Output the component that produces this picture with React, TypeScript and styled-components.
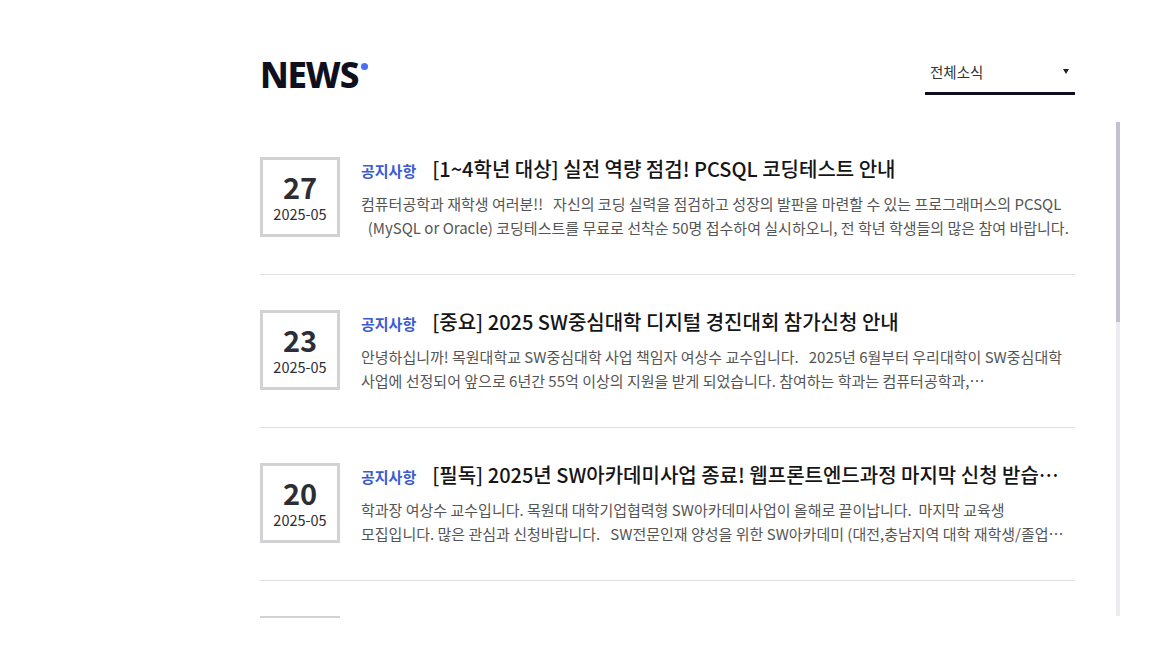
import React from "react";
import styled, { createGlobalStyle } from "styled-components";

const GlobalStyle = createGlobalStyle`
  html, body { margin: 0; padding: 0; background: #fff; }
  body { font-family: "Noto Sans CJK KR", "Noto Sans", sans-serif; color: #111; }
  * { box-sizing: border-box; }
`;

const Page = styled.div`
  padding: 55px 0 0 260px;
  width: 1166px;
  height: 671px;
  overflow: hidden;
`;

const Header = styled.div`
  display: flex;
  align-items: flex-end;
  justify-content: space-between;
  width: 815px;
  height: 40px;
`;

const Title = styled.h2`
  position: relative;
  margin: 0;
  font-family: "Noto Sans", sans-serif;
  font-weight: 800;
  font-size: 35px;
  line-height: 40px;
  letter-spacing: -1.2px;
  color: #0f0f1e;
`;

const Dot = styled.span`
  position: absolute;
  right: -10px;
  top: 8px;
  width: 7px;
  height: 7px;
  border-radius: 50%;
  background: #4a6ef5;
`;

const Select = styled.div`
  display: flex;
  align-items: center;
  justify-content: space-between;
  width: 150px;
  height: 39px;
  padding: 0 6px 5px 5px;
  border-bottom: 3px solid #0f0e1f;
  font-size: 14.5px;
  color: #333;
`;

const Caret = styled.span`
  width: 0;
  height: 0;
  border-left: 3.5px solid transparent;
  border-right: 3.5px solid transparent;
  border-top: 5px solid #222;
`;

const ListWrap = styled.div`
  position: relative;
  margin-top: 27px;
  width: 860px;
  height: 496px;
`;

const List = styled.ul`
  list-style: none;
  margin: 0;
  padding: 0 45px 0 0;
  width: 100%;
  height: 100%;
  overflow: hidden;
`;

const ScrollTrack = styled.div`
  position: absolute;
  top: 0;
  right: 0;
  width: 4px;
  height: 494px;
  background: #ebebf0;
`;

const ScrollThumb = styled.div`
  width: 100%;
  height: 200px;
  background: #c2c1cd;
`;

const Item = styled.li`
  display: flex;
  align-items: flex-start;
  gap: 21px;
  padding: 35px 0 34px;
  border-bottom: 1px solid #e1e1e1;
`;

const DateBox = styled.div`
  flex: none;
  width: 80px;
  height: 80px;
  border: 3px solid #d2d2d4;
  display: flex;
  flex-direction: column;
  align-items: center;
  justify-content: center;
  color: #2d2d36;
`;

const Day = styled.span`
  font-size: 29px;
  font-weight: 700;
  line-height: 32px;
  margin-top: -1px;
`;

const Month = styled.span`
  font-size: 14.5px;
  line-height: 18px;
  margin-top: 3px;
`;

const Body = styled.div`
  flex: 1;
  min-width: 0;
`;

const Heading = styled.div`
  display: flex;
  align-items: baseline;
  gap: 16px;
  height: 26px;
  margin-top: -3px;
`;

const Category = styled.span`
  flex: none;
  font-size: 15px;
  font-weight: 700;
  color: #3c5bd0;
`;

const ItemTitle = styled.span`
  flex: 1;
  min-width: 0;
  font-size: 20px;
  font-weight: 500;
  color: #151515;
  white-space: nowrap;
  overflow: hidden;
  text-overflow: ellipsis;
`;

const Desc = styled.p`
  margin: 12px 0 0;
  font-size: 15px;
  line-height: 24px;
  color: #555;
  word-break: keep-all;
  display: -webkit-box;
  -webkit-line-clamp: 2;
  -webkit-box-orient: vertical;
  overflow: hidden;
`;

const news = [
  {
    day: "27",
    month: "2025-05",
    title: "[1~4학년 대상] 실전 역량 점검! PCSQL 코딩테스트 안내",
    desc: "컴퓨터공학과 재학생 여러분!! \u00a0\u00a0자신의 코딩 실력을 점검하고 성장의 발판을 마련할 수 있는 프로그래머스의 PCSQL \u00a0\u00a0(MySQL or Oracle) 코딩테스트를 무료로 선착순 50명 접수하여 실시하오니, 전 학년 학생들의 많은 참여 바랍니다.",
  },
  {
    day: "23",
    month: "2025-05",
    title: "[중요] 2025 SW중심대학 디지털 경진대회 참가신청 안내",
    desc: "안녕하십니까! 목원대학교 SW중심대학 사업 책임자 여상수 교수입니다. \u00a0\u00a02025년 6월부터 우리대학이 SW중심대학 사업에 선정되어 앞으로 6년간 55억 이상의 지원을 받게 되었습니다. 참여하는 학과는 컴퓨터공학과, 게임소프트웨어공학과, 정보통신융합공학부 등입니다.",
  },
  {
    day: "20",
    month: "2025-05",
    title: "[필독] 2025년 SW아카데미사업 종료! 웹프론트엔드과정 마지막 신청 받습니다",
    desc: "학과장 여상수 교수입니다. 목원대 대학기업협력형 SW아카데미사업이 올해로 끝이납니다. \u00a0마지막 교육생 모집입니다. 많은 관심과 신청바랍니다. \u00a0\u00a0SW전문인재 양성을 위한 SW아카데미 (대전,충남지역 대학 재학생/졸업생 대상) 웹프론트엔드 과정을 모집합니다.",
  },
  {
    day: "15",
    month: "2025-05",
    title: "2025학년도 1학기 컴퓨터공학과 캡스톤디자인 중간발표 안내",
    desc: "2025학년도 1학기 캡스톤디자인 중간발표 일정을 안내드립니다. 각 팀은 발표 자료를 사전에 제출하여 주시기 바랍니다.",
  },
  {
    day: "12",
    month: "2025-05",
    title: "[취업] 2025 상반기 IT 기업 채용설명회 개최 안내",
    desc: "컴퓨터공학과 재학생 및 졸업생을 대상으로 IT 기업 채용설명회를 개최합니다. 관심 있는 학생들의 많은 참여 바랍니다.",
  },
  {
    day: "08",
    month: "2025-05",
    title: "정보처리기사 필기시험 대비 특강 신청 안내",
    desc: "정보처리기사 자격증 취득을 희망하는 학생들을 위한 필기시험 대비 특강을 진행합니다. 선착순 접수이오니 서둘러 신청하시기 바랍니다.",
  },
  {
    day: "02",
    month: "2025-05",
    title: "2025학년도 학과 MT 참가 신청 안내",
    desc: "2025학년도 컴퓨터공학과 학과 MT를 아래와 같이 진행하오니 참가를 희망하는 학생들은 기간 내에 신청하여 주시기 바랍니다.",
  },
  {
    day: "28",
    month: "2025-04",
    title: "[공지] 2025학년도 1학기 중간고사 일정 안내",
    desc: "2025학년도 1학기 중간고사 일정을 안내합니다. 과목별 시험 시간 및 장소를 확인하시기 바랍니다.",
  },
];

export default function App() {
  return (
    <>
      <GlobalStyle />
      <Page>
        <Header>
          <Title>
            NEWS
            <Dot />
          </Title>
          <Select>
            전체소식
            <Caret />
          </Select>
        </Header>
        <ListWrap>
          <List>
            {news.map((n, i) => (
              <Item key={i}>
                <DateBox>
                  <Day>{n.day}</Day>
                  <Month>{n.month}</Month>
                </DateBox>
                <Body>
                  <Heading>
                    <Category>공지사항</Category>
                    <ItemTitle>{n.title}</ItemTitle>
                  </Heading>
                  <Desc>{n.desc}</Desc>
                </Body>
              </Item>
            ))}
          </List>
          <ScrollTrack>
            <ScrollThumb />
          </ScrollTrack>
        </ListWrap>
      </Page>
    </>
  );
}
